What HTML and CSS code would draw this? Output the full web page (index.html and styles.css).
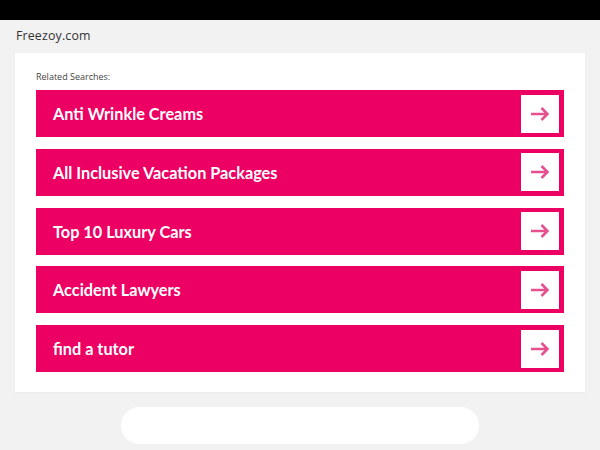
FILE: index.html
```html
<!DOCTYPE html>
<html>
<head>
<meta charset="utf-8">
<link rel="stylesheet" href="styles.css">
</head>
<body>
<div class="topbar"></div>
<div class="site">Freezoy.com</div>
<div class="card">
  <div class="label">Related Searches:</div>
  <div class="list">
    <a class="item"><span class="text">Anti Wrinkle Creams</span><span class="go"><svg width="20" height="16" viewBox="0 0 20 16"><path d="M1 8H17.5M11.5 2L17.5 8L11.5 14" fill="none" stroke="#e6508e" stroke-width="2.5"/></svg></span></a>
    <a class="item"><span class="text">All Inclusive Vacation Packages</span><span class="go"><svg width="20" height="16" viewBox="0 0 20 16"><path d="M1 8H17.5M11.5 2L17.5 8L11.5 14" fill="none" stroke="#e6508e" stroke-width="2.5"/></svg></span></a>
    <a class="item"><span class="text">Top 10 Luxury Cars</span><span class="go"><svg width="20" height="16" viewBox="0 0 20 16"><path d="M1 8H17.5M11.5 2L17.5 8L11.5 14" fill="none" stroke="#e6508e" stroke-width="2.5"/></svg></span></a>
    <a class="item"><span class="text">Accident Lawyers</span><span class="go"><svg width="20" height="16" viewBox="0 0 20 16"><path d="M1 8H17.5M11.5 2L17.5 8L11.5 14" fill="none" stroke="#e6508e" stroke-width="2.5"/></svg></span></a>
    <a class="item"><span class="text">find a tutor</span><span class="go"><svg width="20" height="16" viewBox="0 0 20 16"><path d="M1 8H17.5M11.5 2L17.5 8L11.5 14" fill="none" stroke="#e6508e" stroke-width="2.5"/></svg></span></a>
  </div>
</div>
<div class="pill-wrap"><div class="pill"></div></div>
</body>
</html>
```

FILE: styles.css
```css
html, body {
  margin: 0;
  padding: 0;
  background: #f2f2f2;
  height: 450px;
  overflow: hidden;
}
.topbar {
  height: 20px;
  background: #000;
}
.site {
  font-family: "Open Sans", "Liberation Sans", sans-serif;
  font-size: 12.4px;
  color: #333;
  line-height: 18px;
  padding: 7px 0 0 16px;
  height: 26px;
  letter-spacing: 0.15px;
}
.card {
  margin-left: 15px;
  width: 570px;
  box-sizing: border-box;
  background: #fff;
  padding: 18px 21px 20px 21px;
  height: 339px;
  box-shadow: 0 1px 2px rgba(0,0,0,0.04);
}
.label {
  font-family: "Open Sans", "Liberation Sans", sans-serif;
  font-size: 9px;
  color: #444;
  line-height: 12px;
  margin-bottom: 7px;
}
.list {
  display: flex;
  flex-direction: column;
  gap: 11.75px;
}
.item {
  display: flex;
  align-items: center;
  justify-content: space-between;
  height: 47px;
  background: #ec0063;
  padding: 0 5px 0 17px;
}
.text {
  font-family: Lato, "Liberation Sans", sans-serif;
  font-weight: 700;
  font-size: 16.3px;
  color: #fff;
}
.go {
  width: 38px;
  height: 38px;
  background: #fff;
  display: flex;
  align-items: center;
  justify-content: center;
}
.pill-wrap {
  padding-top: 15px;
  display: flex;
  padding-left: 121px;
}
.pill {
  width: 358px;
  height: 37px;
  background: #fff;
  border-radius: 19px;
}
```
